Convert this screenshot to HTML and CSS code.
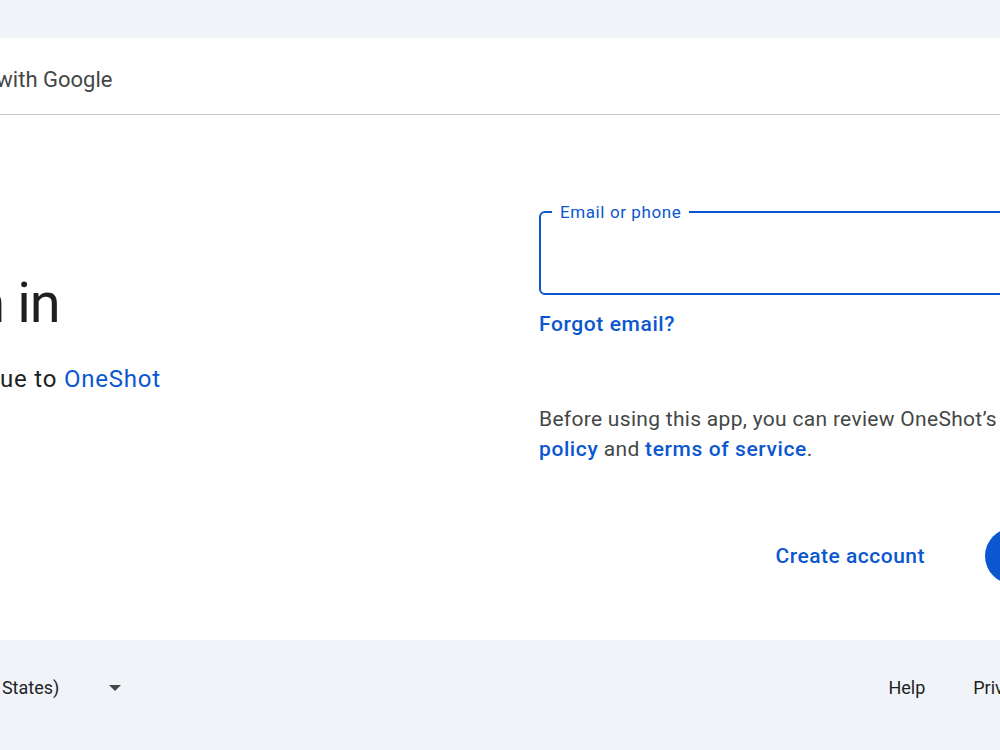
FILE: index.html
```html
<!DOCTYPE html>
<html lang="en">
<head>
      <meta charset="UTF-8">
      <meta name="viewport" content="width=device-width, initial-scale=1.0">
      <title>Sign in - Google Accounts</title>
      <link rel="stylesheet" href="styles.css">
</head>
<body>
      <div class="wrap">
            <div class="card">
                  <div class="card-header">
                        <span>Sign in with Google</span>
                  </div>
                  <div class="card-body">
                        <div class="intro">
                              <h1>Sign in</h1>
                              <p class="subtitle">to continue to <a href="#">OneShot</a></p>
                        </div>
                        <div class="form">
                              <div class="field">
                                    <label class="field-label">Email or phone</label>
                                    <input class="field-input" type="email" autofocus>
                              </div>
                              <a class="forgot" href="#">Forgot email?</a>
                              <p class="notice">Before using this app, you can review OneShot’s <a href="#">privacy policy</a> and <a href="#">terms of service</a>.</p>
                              <div class="actions">
                                    <button class="btn-text">Create account</button>
                                    <button class="btn-next">Next</button>
                              </div>
                        </div>
                  </div>
            </div>
            <div class="footer">
                  <div class="lang">
                        <span>English (United States)</span>
                        <span class="arrow"></span>
                  </div>
                  <ul class="links">
                        <li><a href="#">Help</a></li>
                        <li><a href="#">Privacy</a></li>
                        <li><a href="#">Terms</a></li>
                  </ul>
            </div>
      </div>
</body>
</html>
```

FILE: styles.css
```css
*{
      box-sizing: border-box;
}

body{
      margin: 0;
      background: #f0f4f9;
      font-family: Roboto, "Liberation Sans", sans-serif;
      color: #1f1f1f;
      overflow: hidden;
}
a{
      color: #0b57d0;
      text-decoration: none;
}

.wrap{
      width: 1308px;
      margin-left: -155px;
      padding-top: 38px;
}
.card{
      background: #fff;
}
.card-header{
      height: 77px;
      padding: 6px 0 0 80px;
      display: flex;
      align-items: center;
      border-bottom: 1px solid #c7c7c7;
      font-size: 22px;
      color: #444746;
}
.card-body{
      display: grid;
      grid-template-columns: 1fr 560px;
      padding: 0 54px 56px 54px;
}

.intro{
      padding-top: 156px;
}
.intro h1{
      margin: 0;
      font-size: 56px;
      line-height: 64px;
      font-weight: 400;
      letter-spacing: -1px;
}
.subtitle{
      margin: 29px 0 0 0;
      font-size: 24px;
      line-height: 30px;
      letter-spacing: 0.8px;
}

.form{
      padding-top: 96px;
}
.field{
      position: relative;
}
.field-label{
      position: absolute;
      left: 13px;
      top: -10px;
      padding: 0 8px;
      background: #fff;
      color: #0b57d0;
      font-size: 17px;
      line-height: 22px;
      letter-spacing: 0.6px;
}
.field-input{
      display: block;
      width: 100%;
      height: 84px;
      border: 2px solid #0b57d0;
      border-radius: 6px;
      outline: none;
      font: inherit;
}
.forgot{
      display: inline-block;
      margin-top: 14px;
      font-size: 21px;
      line-height: 30px;
      font-weight: 500;
      letter-spacing: 0.6px;
}
.notice{
      margin: 65px 0 0 0;
      font-size: 21px;
      line-height: 30px;
      color: #444746;
      letter-spacing: 0.3px;
}
.notice a{
      font-weight: 500;
      letter-spacing: 0.6px;
}
.actions{
      margin-top: 64px;
      display: flex;
      justify-content: flex-end;
      gap: 24px;
}
.actions button{
      height: 56px;
      padding: 0 36px;
      border: none;
      border-radius: 28px;
      font-family: inherit;
      font-size: 21px;
      font-weight: 500;
      letter-spacing: 0.5px;
      cursor: pointer;
}
.btn-text{
      background: none;
      color: #0b57d0;
}
.btn-next{
      width: 114px;
      background: #0b57d0;
      color: #fff;
}

.footer{
      display: flex;
      justify-content: space-between;
      align-items: center;
      padding-top: 33px;
      font-size: 18px;
      line-height: 30px;
}
.lang{
      display: flex;
      align-items: center;
      padding-left: 32px;
}
.arrow{
      margin-left: 50px;
      width: 0;
      height: 0;
      border-left: 6px solid transparent;
      border-right: 6px solid transparent;
      border-top: 6px solid #444746;
}
.links{
      margin: 0;
      padding: 0;
      list-style: none;
      display: flex;
}
.links a{
      display: block;
      padding: 0 24px;
      color: #1f1f1f;
}
.links li:last-child a{
      padding-right: 23px;
}
```
